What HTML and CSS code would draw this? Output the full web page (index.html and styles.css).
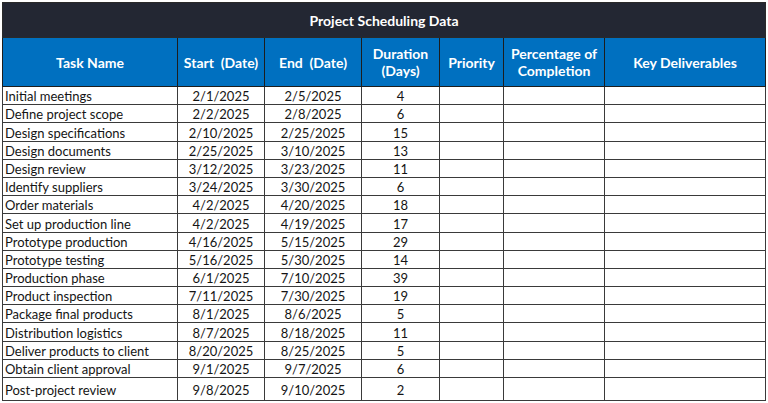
FILE: index.html
```html
<!DOCTYPE html>
<html>
<head>
<meta charset="utf-8">
<link rel="stylesheet" href="styles.css">
</head>
<body>
<table class="sheet">
  <colgroup>
    <col class="c-task"><col class="c-start"><col class="c-end"><col class="c-dur"><col class="c-pri"><col class="c-pct"><col class="c-key">
  </colgroup>
  <thead>
    <tr class="title-row"><th colspan="7">Project Scheduling Data</th></tr>
    <tr class="head-row">
      <th>Task Name</th>
      <th>Start&nbsp; (Date)</th>
      <th>End&nbsp; (Date)</th>
      <th>Duration<br>(Days)</th>
      <th>Priority</th>
      <th>Percentage of<br>Completion</th>
      <th>Key Deliverables</th>
    </tr>
  </thead>
  <tbody>
    <tr><td class="task">Initial meetings</td><td>2/1/2025</td><td>2/5/2025</td><td>4</td><td></td><td></td><td></td></tr>
    <tr><td class="task">Define project scope</td><td>2/2/2025</td><td>2/8/2025</td><td>6</td><td></td><td></td><td></td></tr>
    <tr><td class="task">Design specifications</td><td>2/10/2025</td><td>2/25/2025</td><td>15</td><td></td><td></td><td></td></tr>
    <tr><td class="task">Design documents</td><td>2/25/2025</td><td>3/10/2025</td><td>13</td><td></td><td></td><td></td></tr>
    <tr><td class="task">Design review</td><td>3/12/2025</td><td>3/23/2025</td><td>11</td><td></td><td></td><td></td></tr>
    <tr><td class="task">Identify suppliers</td><td>3/24/2025</td><td>3/30/2025</td><td>6</td><td></td><td></td><td></td></tr>
    <tr><td class="task">Order materials</td><td>4/2/2025</td><td>4/20/2025</td><td>18</td><td></td><td></td><td></td></tr>
    <tr><td class="task">Set up production line</td><td>4/2/2025</td><td>4/19/2025</td><td>17</td><td></td><td></td><td></td></tr>
    <tr><td class="task">Prototype production</td><td>4/16/2025</td><td>5/15/2025</td><td>29</td><td></td><td></td><td></td></tr>
    <tr><td class="task">Prototype testing</td><td>5/16/2025</td><td>5/30/2025</td><td>14</td><td></td><td></td><td></td></tr>
    <tr><td class="task">Production phase</td><td>6/1/2025</td><td>7/10/2025</td><td>39</td><td></td><td></td><td></td></tr>
    <tr><td class="task">Product inspection</td><td>7/11/2025</td><td>7/30/2025</td><td>19</td><td></td><td></td><td></td></tr>
    <tr><td class="task">Package final products</td><td>8/1/2025</td><td>8/6/2025</td><td>5</td><td></td><td></td><td></td></tr>
    <tr><td class="task">Distribution logistics</td><td>8/7/2025</td><td>8/18/2025</td><td>11</td><td></td><td></td><td></td></tr>
    <tr><td class="task">Deliver products to client</td><td>8/20/2025</td><td>8/25/2025</td><td>5</td><td></td><td></td><td></td></tr>
    <tr><td class="task">Obtain client approval</td><td>9/1/2025</td><td>9/7/2025</td><td>6</td><td></td><td></td><td></td></tr>
    <tr class="last"><td class="task">Post-project review</td><td>9/8/2025</td><td>9/10/2025</td><td>2</td><td></td><td></td><td></td></tr>
  </tbody>
</table>
</body>
</html>
```
FILE: styles.css
```css
html, body {
  margin: 0;
  padding: 0;
  background: #ffffff;
}
body {
  padding: 2px 0 0 2px;
  font-family: Lato, "Open Sans", sans-serif;
  color: #141414;
}
.sheet {
  border-collapse: collapse;
  table-layout: fixed;
  width: 764px;
  font-size: 13px;
  border: 1px solid #8a8a8a;
}
.c-task { width: 175px; }
.c-start { width: 87px; }
.c-end { width: 97px; }
.c-dur { width: 78px; }
.c-pri { width: 64px; }
.c-pct { width: 101px; }
.c-key { width: 161px; }

.title-row th {
  background: #232733;
  color: #ffffff;
  font-weight: 700;
  font-size: 14px;
  height: 34px;
  padding: 0;
  text-align: center;
  border: 1px solid #2a2a2a;
}
.head-row th {
  background: #0070c0;
  color: #ffffff;
  font-weight: 700;
  font-size: 14px;
  line-height: 17px;
  height: 48px;
  padding: 0 2px;
  text-align: center;
  border: 1px solid #1d1d1d;
}
td {
  height: 17.2px;
  padding: 0 2px;
  border: 1px solid #3a3a3a;
  text-align: center;
  vertical-align: bottom;
  line-height: 16px;
  white-space: nowrap;
}
td.task {
  text-align: left;
  padding-left: 2px;
}
tr.last td {
  height: 20px;
  vertical-align: middle;
  padding-top: 2px;
}
```
